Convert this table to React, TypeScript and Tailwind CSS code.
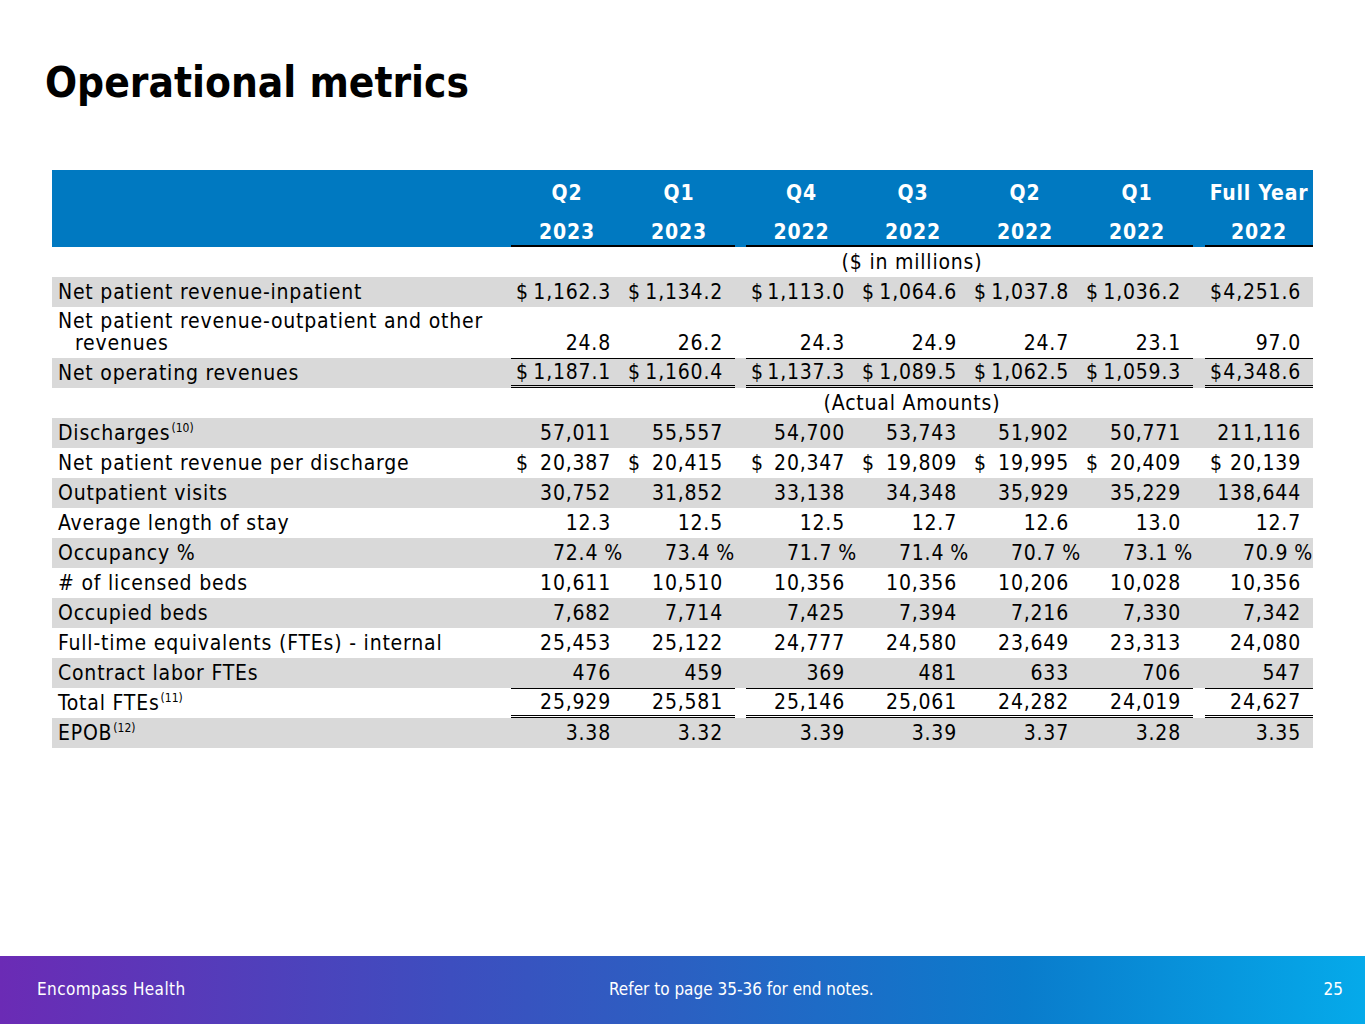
import React from "react";

type Row = {
  label: React.ReactNode;
  vals: string[];
  gray?: boolean;
  dollar?: boolean;
  pct?: boolean;
  tall?: boolean;
  topLine?: boolean;
  doubleBottom?: boolean;
};

const FONT = { fontFamily: '"DejaVu Sans Condensed", "DejaVu Sans", sans-serif' };

const Sup = ({ t }: { t: string }) => (
  <sup className="text-[12px] tracking-[0px] relative -top-[8px] ml-[1px]">{t}</sup>
);

const rowsA: Row[] = [
  {
    label: "Net patient revenue-inpatient",
    vals: ["1,162.3", "1,134.2", "1,113.0", "1,064.6", "1,037.8", "1,036.2", "4,251.6"],
    gray: true,
    dollar: true,
  },
  {
    label: (
      <div className="leading-[22px] pt-[3px]">
        <div>Net patient revenue-outpatient and other</div>
        <div className="pl-[17px]">revenues</div>
      </div>
    ),
    vals: ["24.8", "26.2", "24.3", "24.9", "24.7", "23.1", "97.0"],
    tall: true,
  },
  {
    label: "Net operating revenues",
    vals: ["1,187.1", "1,160.4", "1,137.3", "1,089.5", "1,062.5", "1,059.3", "4,348.6"],
    gray: true,
    dollar: true,
    topLine: true,
    doubleBottom: true,
  },
];

const rowsB: Row[] = [
  {
    label: (
      <span>
        Discharges<Sup t="(10)" />
      </span>
    ),
    vals: ["57,011", "55,557", "54,700", "53,743", "51,902", "50,771", "211,116"],
    gray: true,
  },
  {
    label: "Net patient revenue per discharge",
    vals: ["20,387", "20,415", "20,347", "19,809", "19,995", "20,409", "20,139"],
    dollar: true,
  },
  {
    label: "Outpatient visits",
    vals: ["30,752", "31,852", "33,138", "34,348", "35,929", "35,229", "138,644"],
    gray: true,
  },
  {
    label: "Average length of stay",
    vals: ["12.3", "12.5", "12.5", "12.7", "12.6", "13.0", "12.7"],
  },
  {
    label: "Occupancy %",
    vals: ["72.4", "73.4", "71.7", "71.4", "70.7", "73.1", "70.9"],
    gray: true,
    pct: true,
  },
  {
    label: "# of licensed beds",
    vals: ["10,611", "10,510", "10,356", "10,356", "10,206", "10,028", "10,356"],
  },
  {
    label: "Occupied beds",
    vals: ["7,682", "7,714", "7,425", "7,394", "7,216", "7,330", "7,342"],
    gray: true,
  },
  {
    label: "Full-time equivalents (FTEs) - internal",
    vals: ["25,453", "25,122", "24,777", "24,580", "23,649", "23,313", "24,080"],
  },
  {
    label: "Contract labor FTEs",
    vals: ["476", "459", "369", "481", "633", "706", "547"],
    gray: true,
  },
  {
    label: (
      <span>
        Total FTEs<Sup t="(11)" />
      </span>
    ),
    vals: ["25,929", "25,581", "25,146", "25,061", "24,282", "24,019", "24,627"],
    topLine: true,
    doubleBottom: true,
  },
  {
    label: (
      <span>
        EPOB<Sup t="(12)" />
      </span>
    ),
    vals: ["3.38", "3.32", "3.39", "3.39", "3.37", "3.28", "3.35"],
    gray: true,
  },
];

// column layout: label, c1, c2, gap, c3, c4, c5, c6, gap, c7
const COLS = "grid grid-cols-[459px_112px_112px_11px_111px_112px_112px_112px_12px_108px]";

function ValueCell({ v, row }: { v: string; row: Row }) {
  const border = row.topLine ? "border-t border-black" : "";
  const bottom = row.doubleBottom ? "border-b-[3px] border-double border-black" : "";
  return (
    <div
      className={`relative flex items-center justify-end ${row.pct ? "pr-0" : "pr-[12px]"} pl-[6px] ${border} ${bottom}`}
    >
      {row.dollar && <span className="absolute left-[5px]">$</span>}
      <span>
        {v}
        {row.pct && <span className="ml-[6px]">%</span>}
      </span>
    </div>
  );
}

function TallCell({ v }: { v: string }) {
  return <div className="flex items-end justify-end pr-[12px] pb-[3px]">{v}</div>;
}

function DataRow({ row }: { row: Row }) {
  const cells = row.vals;
  const h = row.tall ? "h-[51px]" : "h-[30px]";
  return (
    <div className={`${COLS} ${h} ${row.gray ? "bg-[#d9d9d9]" : ""}`}>
      <div className={`flex ${row.tall ? "items-start" : "items-center"} pl-[6px] whitespace-nowrap`}>
        {row.label}
      </div>
      {row.tall ? (
        <>
          <TallCell v={cells[0]} />
          <TallCell v={cells[1]} />
          <div />
          {cells.slice(2, 6).map((v, i) => (
            <TallCell key={i} v={v} />
          ))}
          <div />
          <TallCell v={cells[6]} />
        </>
      ) : (
        <>
          <ValueCell v={cells[0]} row={row} />
          <ValueCell v={cells[1]} row={row} />
          <div />
          {cells.slice(2, 6).map((v, i) => (
            <ValueCell key={i} v={v} row={row} />
          ))}
          <div />
          <ValueCell v={cells[6]} row={row} />
        </>
      )}
    </div>
  );
}

function SectionNote({ text }: { text: string }) {
  return (
    <div className="grid grid-cols-[459px_802px] h-[30px]">
      <div />
      <div className="flex items-center justify-center">{text}</div>
    </div>
  );
}

const Q = ["Q2", "Q1", "Q4", "Q3", "Q2", "Q1", "Full Year"];
const Y = ["2023", "2023", "2022", "2022", "2022", "2022", "2022"];

function HeaderRow({ labels, line }: { labels: string[]; line?: boolean }) {
  const cls = `flex items-center justify-center ${line ? "border-b-2 border-black pt-[9px]" : "pt-[7px]"}`;
  return (
    <div className={`${COLS} ${line ? "h-[38px]" : "h-[39px]"}`}>
      <div />
      <div className={cls}>{labels[0]}</div>
      <div className={cls}>{labels[1]}</div>
      <div />
      {labels.slice(2, 6).map((l, i) => (
        <div key={i} className={cls}>
          {l}
        </div>
      ))}
      <div />
      <div className={cls}>{labels[6]}</div>
    </div>
  );
}

export default function App() {
  return (
    <div className="w-[1365px] h-[1024px] bg-white flex flex-col text-black" style={FONT}>
      <div className="h-[170px] pl-[45px] pt-[56px]">
        <h1 className="text-[42px] font-bold leading-[54px] tracking-[0px]">Operational metrics</h1>
      </div>
      <div className="pl-[52px] text-[21px] leading-[24px] tracking-[0.8px]">
        <div className="w-[1261px]">
          <div className="bg-[#0079c1] text-white font-bold">
            <HeaderRow labels={Q} />
            <HeaderRow labels={Y} line />
          </div>
          <SectionNote text="($ in millions)" />
          {rowsA.map((r, i) => (
            <DataRow key={i} row={r} />
          ))}
          <SectionNote text="(Actual Amounts)" />
          {rowsB.map((r, i) => (
            <DataRow key={i} row={r} />
          ))}
        </div>
      </div>
      <div className="flex-1" />
      <div className="h-[68px] bg-[linear-gradient(90deg,#6b2bb5_0%,#3d4ebf_33%,#2b60c2_50%,#0a7ccc_75%,#05aaea_100%)] text-white text-[17px] flex items-center">
        <div className="w-[572px] pl-[37px] tracking-[0.4px]">Encompass Health</div>
        <div className="flex-1 pl-[37px]">Refer to page 35-36 for end notes.</div>
        <div className="pr-[22px]">25</div>
      </div>
    </div>
  );
}
